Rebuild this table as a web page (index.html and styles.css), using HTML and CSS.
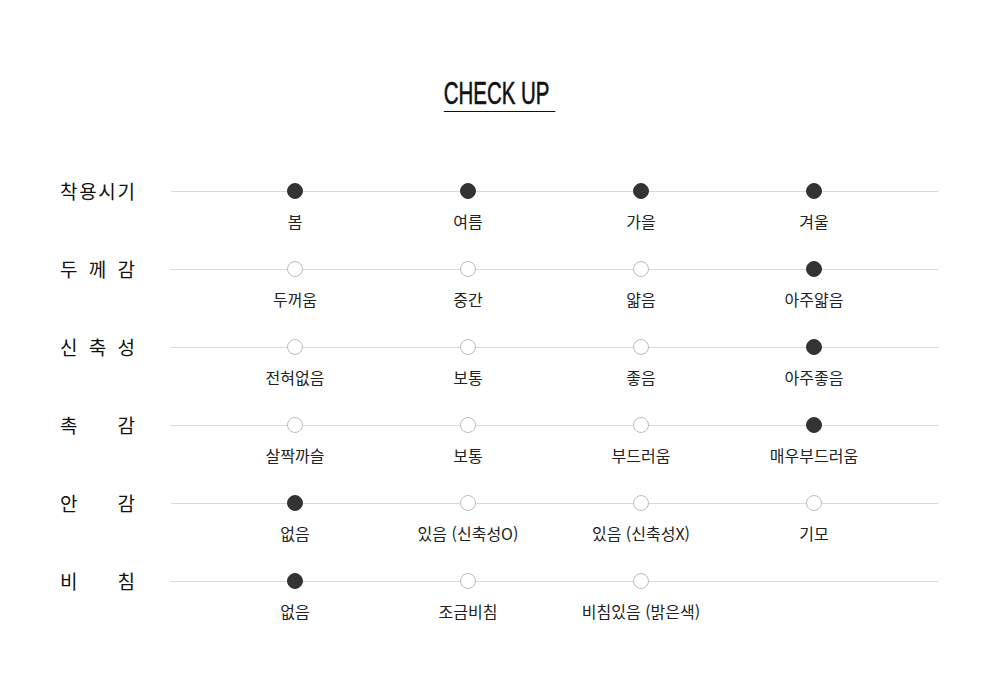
FILE: index.html
```html
<!DOCTYPE html>
<html lang="ko">
<head>
<meta charset="utf-8">
<link rel="stylesheet" href="styles.css">
</head>
<body>
<div class="page">
  <div class="title-wrap"><h1 class="title">CHECK UP</h1></div>
  <div class="table">
    <div class="row">
      <div class="label"><span>착</span><span>용</span><span>시</span><span>기</span></div>
      <div class="track">
        <div class="opt"><i class="dot on"></i><span>봄</span></div>
        <div class="opt"><i class="dot on"></i><span>여름</span></div>
        <div class="opt"><i class="dot on"></i><span>가을</span></div>
        <div class="opt"><i class="dot on"></i><span>겨울</span></div>
      </div>
    </div>
    <div class="row">
      <div class="label"><span>두</span><span>께</span><span>감</span></div>
      <div class="track">
        <div class="opt"><i class="dot"></i><span>두꺼움</span></div>
        <div class="opt"><i class="dot"></i><span>중간</span></div>
        <div class="opt"><i class="dot"></i><span>얇음</span></div>
        <div class="opt"><i class="dot on"></i><span>아주얇음</span></div>
      </div>
    </div>
    <div class="row">
      <div class="label"><span>신</span><span>축</span><span>성</span></div>
      <div class="track">
        <div class="opt"><i class="dot"></i><span>전혀없음</span></div>
        <div class="opt"><i class="dot"></i><span>보통</span></div>
        <div class="opt"><i class="dot"></i><span>좋음</span></div>
        <div class="opt"><i class="dot on"></i><span>아주좋음</span></div>
      </div>
    </div>
    <div class="row">
      <div class="label"><span>촉</span><span>감</span></div>
      <div class="track">
        <div class="opt"><i class="dot"></i><span>살짝까슬</span></div>
        <div class="opt"><i class="dot"></i><span>보통</span></div>
        <div class="opt"><i class="dot"></i><span>부드러움</span></div>
        <div class="opt"><i class="dot on"></i><span>매우부드러움</span></div>
      </div>
    </div>
    <div class="row">
      <div class="label"><span>안</span><span>감</span></div>
      <div class="track">
        <div class="opt"><i class="dot on"></i><span>없음</span></div>
        <div class="opt"><i class="dot"></i><span>있음 (신축성O)</span></div>
        <div class="opt"><i class="dot"></i><span>있음 (신축성X)</span></div>
        <div class="opt"><i class="dot"></i><span>기모</span></div>
      </div>
    </div>
    <div class="row">
      <div class="label"><span>비</span><span>침</span></div>
      <div class="track">
        <div class="opt"><i class="dot on"></i><span>없음</span></div>
        <div class="opt"><i class="dot"></i><span>조금비침</span></div>
        <div class="opt"><i class="dot"></i><span>비침있음 (밝은색)</span></div>
        <div class="opt empty"></div>
      </div>
    </div>
  </div>
</div>
</body>
</html>
```

FILE: styles.css
```css
* { box-sizing: border-box; }
html, body { margin: 0; padding: 0; background: #fff; }
body {
  font-family: "Noto Sans CJK KR", "Noto Sans", sans-serif;
  color: #222;
}
.page {
  width: 1000px;
  padding-top: 77px;
}
.title-wrap {
  display: flex;
  justify-content: center;
  height: 35px;
}
.title {
  margin: 0;
  font-family: "Liberation Sans", Arial, sans-serif;
  font-weight: normal;
  font-size: 31px;
  line-height: 34px;
  height: 35px;
  color: #111;
  white-space: nowrap;
  padding-right: 9px;
  border-bottom: 1px solid #111;
  transform: scaleX(0.66);
  transform-origin: center;
  -webkit-text-stroke: 0.6px #111;
}
.table {
  margin-top: 67px;
  padding-left: 60px;
  display: flex;
  flex-direction: column;
}
.row {
  display: flex;
  height: 78px;
}
.label {
  width: 75px;
  margin-right: 36px;
  display: flex;
  justify-content: space-between;
  font-size: 19px;
  line-height: 24px;
  height: 24px;
  color: #111;
}
.track {
  width: 767px;
  display: grid;
  grid-template-columns: repeat(4, 173px);
  justify-content: center;
  background: linear-gradient(#d9d9d9, #d9d9d9) no-repeat 0 12px / 100% 1px;
}
.opt {
  display: flex;
  flex-direction: column;
  align-items: center;
  padding-top: 4px;
}
.dot {
  display: block;
  width: 16px;
  height: 16px;
  border-radius: 50%;
  border: 1px solid #bdbdbd;
  background: #fff;
}
.dot.on {
  background: #333;
  border-color: #333;
}
.opt span {
  margin-top: 11px;
  font-size: 16px;
  line-height: 22px;
  color: #222;
  white-space: nowrap;
}
```
